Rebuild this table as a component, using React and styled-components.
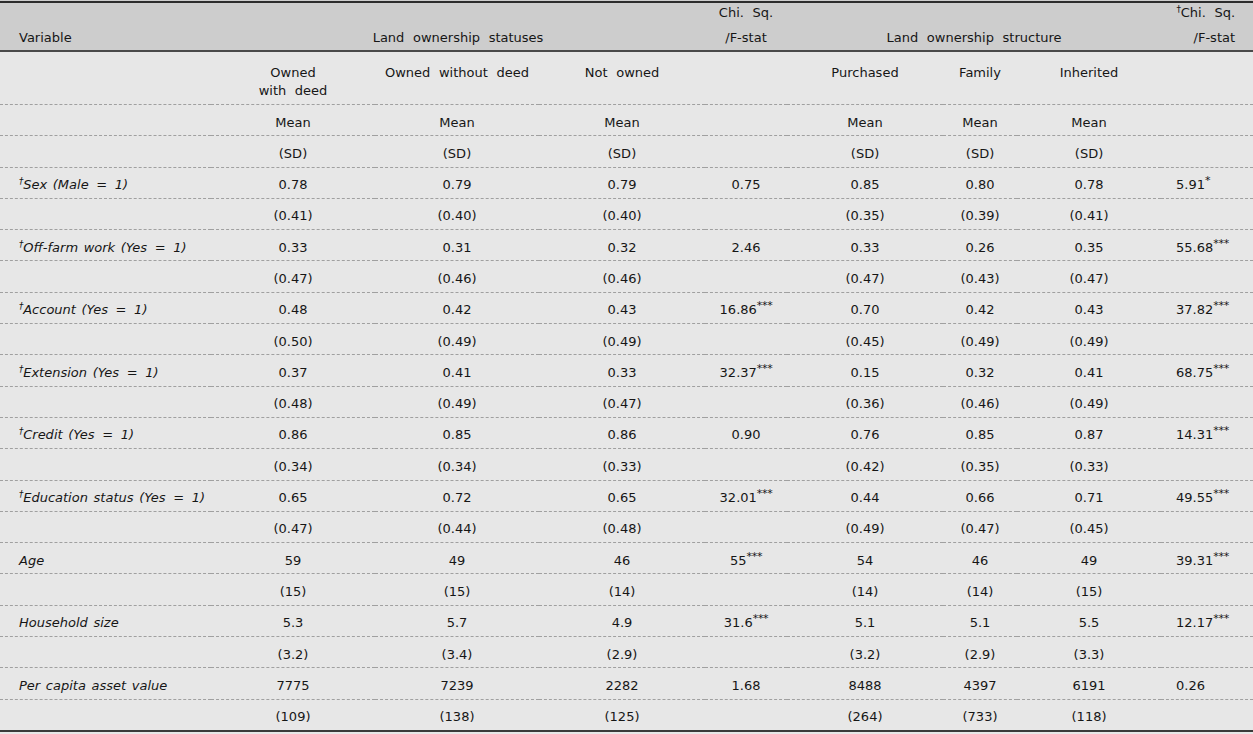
import React from "react";
import styled, { createGlobalStyle } from "styled-components";

const GlobalStyle = createGlobalStyle`
  html, body { margin: 0; padding: 0; background: #e7e7e7; }
  body {
    font-family: "DejaVu Sans", "Liberation Sans", sans-serif;
    font-size: 13px;
    color: #161616;
  }
`;

const Frame = styled.div`
  padding-top: 1px;
  background: #cdcdcd;
  width: 1253px;
`;

const Table = styled.table`
  width: 1253px;
  table-layout: fixed;
  border-collapse: separate;
  border-spacing: 0;
  border-top: 2px solid #2c2c2c;
  background: #e7e7e7;
  word-spacing: 4.5px;
`;

const HeadCell = styled.th`
  box-sizing: border-box;
  height: 49px;
  padding: 0 ${(p) => p.$pr || 0}px 0 ${(p) => p.$pl || 0}px;
  background: #cdcdcd;
  border-bottom: 2px solid #4a4a4a;
  font-weight: normal;
  text-align: ${(p) => p.$align || "center"};
  vertical-align: bottom;
  line-height: 25px;
  white-space: nowrap;
`;

const Stack = styled.div`
  margin-top: -3px;
  line-height: 25px;
`;

const Cell = styled.td`
  box-sizing: border-box;
  padding: ${(p) => (p.$tall ? "12px" : "7.5px")}
    ${(p) => p.$pr || 0}px
    ${(p) => (p.$tall ? "4px" : "2.8px")}
    ${(p) => p.$pl || 0}px;
  line-height: ${(p) => (p.$tall ? "18px" : "20px")};
  text-align: ${(p) => p.$align || "center"};
  vertical-align: top;
  white-space: nowrap;
  border-bottom: ${(p) => (p.$last ? "2px solid #3a3a3a" : "1px dashed #a0a0a0")};
`;

const Label = styled.span`
  font-style: italic;
  word-spacing: 1.5px;
`;

const Eq = styled.span`
  margin: 0 2px;
`;

const Sup = styled.sup`
  font-size: ${(p) => (p.$small ? "9px" : "11px")};
  line-height: 0;
  vertical-align: 5px;
  word-spacing: 0;
  letter-spacing: -0.3px;
`;

const widths = [211, 164, 164, 166, 82, 156, 74, 144, 92];

const rows = [
  { label: ["Sex (Male", "1)"], dag: true, v: ["0.78", "0.79", "0.79", ["0.75"], "0.85", "0.80", "0.78", ["5.91", "*"]], sd: ["(0.41)", "(0.40)", "(0.40)", "(0.35)", "(0.39)", "(0.41)"] },
  { label: ["Off-farm work (Yes", "1)"], dag: true, v: ["0.33", "0.31", "0.32", ["2.46"], "0.33", "0.26", "0.35", ["55.68", "***"]], sd: ["(0.47)", "(0.46)", "(0.46)", "(0.47)", "(0.43)", "(0.47)"] },
  { label: ["Account (Yes", "1)"], dag: true, v: ["0.48", "0.42", "0.43", ["16.86", "***"], "0.70", "0.42", "0.43", ["37.82", "***"]], sd: ["(0.50)", "(0.49)", "(0.49)", "(0.45)", "(0.49)", "(0.49)"] },
  { label: ["Extension (Yes", "1)"], dag: true, v: ["0.37", "0.41", "0.33", ["32.37", "***"], "0.15", "0.32", "0.41", ["68.75", "***"]], sd: ["(0.48)", "(0.49)", "(0.47)", "(0.36)", "(0.46)", "(0.49)"] },
  { label: ["Credit (Yes", "1)"], dag: true, v: ["0.86", "0.85", "0.86", ["0.90"], "0.76", "0.85", "0.87", ["14.31", "***"]], sd: ["(0.34)", "(0.34)", "(0.33)", "(0.42)", "(0.35)", "(0.33)"] },
  { label: ["Education status (Yes", "1)"], dag: true, v: ["0.65", "0.72", "0.65", ["32.01", "***"], "0.44", "0.66", "0.71", ["49.55", "***"]], sd: ["(0.47)", "(0.44)", "(0.48)", "(0.49)", "(0.47)", "(0.45)"] },
  { label: ["Age"], v: ["59", "49", "46", ["55", "***"], "54", "46", "49", ["39.31", "***"]], sd: ["(15)", "(15)", "(14)", "(14)", "(14)", "(15)"] },
  { label: ["Household size"], v: ["5.3", "5.7", "4.9", ["31.6", "***"], "5.1", "5.1", "5.5", ["12.17", "***"]], sd: ["(3.2)", "(3.4)", "(2.9)", "(3.2)", "(2.9)", "(3.3)"] },
  { label: ["Per capita asset value"], v: ["7775", "7239", "2282", ["1.68"], "8488", "4397", "6191", ["0.26"]], sd: ["(109)", "(138)", "(125)", "(264)", "(733)", "(118)"] },
];

function Stat({ value }) {
  return (
    <>
      {value[0]}
      {value[1] && <Sup>{value[1]}</Sup>}
    </>
  );
}

function SubRow({ cells, tall }) {
  return (
    <tr>
      <Cell $tall={tall} $pl={19} $align="left" />
      <Cell $tall={tall}>{cells[0]}</Cell>
      <Cell $tall={tall}>{cells[1]}</Cell>
      <Cell $tall={tall}>{cells[2]}</Cell>
      <Cell $tall={tall} />
      <Cell $tall={tall}>{cells[3]}</Cell>
      <Cell $tall={tall}>{cells[4]}</Cell>
      <Cell $tall={tall}>{cells[5]}</Cell>
      <Cell $tall={tall} />
    </tr>
  );
}

function DataRows({ row, last }) {
  const v = row.v;
  return (
    <>
      <tr>
        <Cell $align="left" $pl={19}>
          <Label>
            {row.dag && <Sup $small>†</Sup>}
            {row.label[0]}
            {row.label[1] && (
              <>
                {" "}
                <Eq>=</Eq> {row.label[1]}
              </>
            )}
          </Label>
        </Cell>
        <Cell>{v[0]}</Cell>
        <Cell>{v[1]}</Cell>
        <Cell>{v[2]}</Cell>
        <Cell><Stat value={v[3]} /></Cell>
        <Cell>{v[4]}</Cell>
        <Cell>{v[5]}</Cell>
        <Cell>{v[6]}</Cell>
        <Cell $align="left" $pl={15}><Stat value={v[7]} /></Cell>
      </tr>
      <tr>
        <Cell $last={last} />
        <Cell $last={last}>{row.sd[0]}</Cell>
        <Cell $last={last}>{row.sd[1]}</Cell>
        <Cell $last={last}>{row.sd[2]}</Cell>
        <Cell $last={last} />
        <Cell $last={last}>{row.sd[3]}</Cell>
        <Cell $last={last}>{row.sd[4]}</Cell>
        <Cell $last={last}>{row.sd[5]}</Cell>
        <Cell $last={last} />
      </tr>
    </>
  );
}

export default function App() {
  return (
    <>
      <GlobalStyle />
      <Frame>
        <Table>
          <colgroup>
            {widths.map((w, i) => (
              <col key={i} style={{ width: w }} />
            ))}
          </colgroup>
          <thead>
            <tr>
              <HeadCell $align="left" $pl={19}>Variable</HeadCell>
              <HeadCell colSpan={3}>Land ownership statuses</HeadCell>
              <HeadCell>
                <Stack>
                  Chi. Sq.
                  <br />
                  /F-stat
                </Stack>
              </HeadCell>
              <HeadCell colSpan={3}>Land ownership structure</HeadCell>
              <HeadCell $align="right" $pr={18}>
                <Stack>
                  <Sup $small>†</Sup>Chi. Sq.
                  <br />
                  /F-stat
                </Stack>
              </HeadCell>
            </tr>
          </thead>
          <tbody>
            <SubRow
              tall
              cells={[
                <>Owned<br />with deed</>,
                "Owned without deed",
                "Not owned",
                "Purchased",
                "Family",
                "Inherited",
              ]}
            />
            <SubRow cells={["Mean", "Mean", "Mean", "Mean", "Mean", "Mean"]} />
            <SubRow cells={["(SD)", "(SD)", "(SD)", "(SD)", "(SD)", "(SD)"]} />
            {rows.map((r, i) => (
              <DataRows key={r.label[0]} row={r} last={i === rows.length - 1} />
            ))}
          </tbody>
        </Table>
      </Frame>
    </>
  );
}
